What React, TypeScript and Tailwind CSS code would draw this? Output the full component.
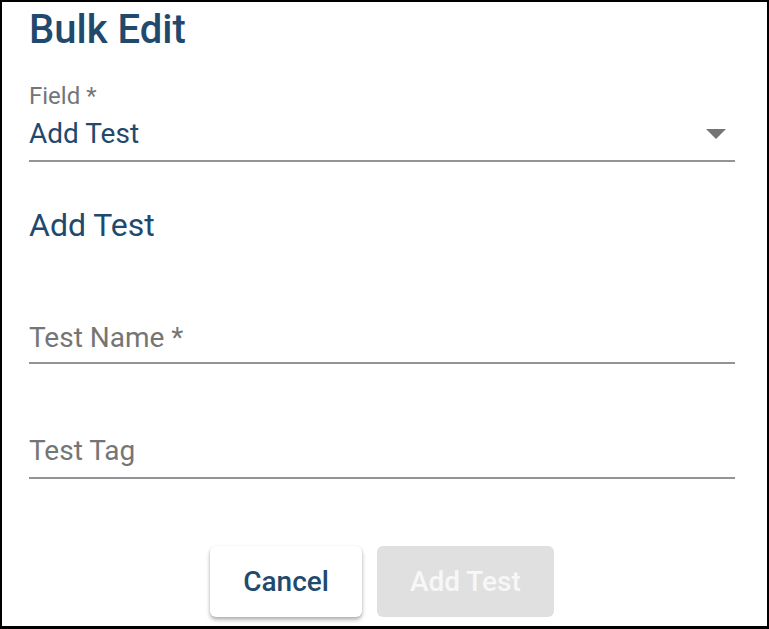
import React from 'react';

const navy = 'text-[#1f4a6e]';

function Underline() {
  return <div className="h-[2px] bg-[#949494]" />;
}

function TextField({ label, gapTop, gapLine }: { label: string; gapTop: string; gapLine: string }) {
  return (
    <div className={gapTop}>
      <div className="text-[28px] leading-[28px] text-[#757575]">{label}</div>
      <div className={gapLine}>
        <Underline />
      </div>
    </div>
  );
}

export default function App() {
  return (
    <div
      className="w-[769px] h-[629px] box-border bg-white border-black border-l-2 border-t-2 border-r-2 border-b-[3px] pl-[27px] pr-[32px] pt-[8px] flex flex-col"
      style={{ fontFamily: 'Roboto, "Liberation Sans", sans-serif' }}
    >
      <h1 className={`text-[40px] leading-[40px] font-medium ${navy}`}>Bulk Edit</h1>

      {/* field selector */}
      <div className="mt-[34px]">
        <div className="text-[24px] leading-[24px] text-[#757575]">Field *</div>
        <div className="mt-[12px] flex items-center justify-between pr-[9px]">
          <span className={`text-[28px] leading-[28px] ${navy}`}>Add Test</span>
          <svg width="20" height="10" viewBox="0 0 20 10" className="block">
            <polygon points="0,0 20,0 10,10" fill="#757575" />
          </svg>
        </div>
        <div className="mt-[12px]">
          <Underline />
        </div>
      </div>

      <h2 className={`mt-[47px] text-[32px] leading-[32px] ${navy}`}>Add Test</h2>

      <TextField label="Test Name *" gapTop="mt-[83px]" gapLine="mt-[10px]" />
      <TextField label="Test Tag" gapTop="mt-[73px]" gapLine="mt-[12px]" />

      <div className="mt-auto mb-[9px] flex justify-center gap-[15px]">
        <button className={`h-[71px] px-[33px] rounded-[6px] bg-white shadow-[0_3px_4px_rgba(0,0,0,0.25),0_1px_3px_rgba(0,0,0,0.12)] text-[28px] font-medium ${navy}`}>
          Cancel
        </button>
        <button disabled className="h-[71px] px-[33px] rounded-[6px] bg-[#e0e0e0] text-[28px] font-medium text-[#f7f7f7]">
          Add Test
        </button>
      </div>
    </div>
  );
}
